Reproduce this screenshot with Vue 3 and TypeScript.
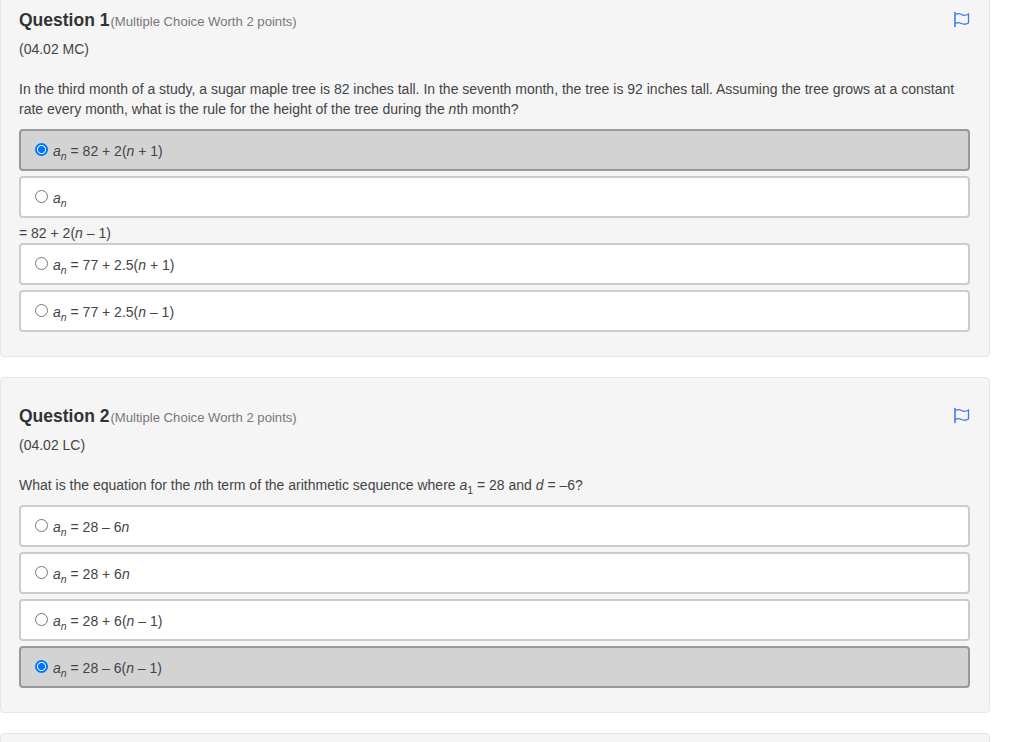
<script setup lang="ts">
interface Option { parts: [string, boolean][]; selected?: boolean; after?: [string, boolean][] }
interface Question { num: number; code: string; options: Option[] }

const poleX = 'M2 1v15'
const flagPath = 'M2.500 3.500c2-1.200 4-1.200 6 0s4.500 1 7 -.5v9c-2.500 1.500-5 1.500-7 .5s-4-1.200-6 0'

const questions: Question[] = [
  {
    num: 1,
    code: '(04.02 MC)',
    options: [
      { parts: [[' = 82 + 2(', false], ['n', true], [' + 1)', false]], selected: true },
      { parts: [], after: [['= 82 + 2(', false], ['n', true], [' – 1)', false]] },
      { parts: [[' = 77 + 2.5(', false], ['n', true], [' + 1)', false]] },
      { parts: [[' = 77 + 2.5(', false], ['n', true], [' – 1)', false]] },
    ],
  },
  {
    num: 2,
    code: '(04.02 LC)',
    options: [
      { parts: [[' = 28 – 6', false], ['n', true]] },
      { parts: [[' = 28 + 6', false], ['n', true]] },
      { parts: [[' = 28 + 6(', false], ['n', true], [' – 1)', false]] },
      { parts: [[' = 28 – 6(', false], ['n', true], [' – 1)', false]], selected: true },
    ],
  },
]
</script>

<template>
  <div class="page">
    <section v-for="q in questions" :key="q.num" class="card">
      <header class="head">
        <h2 class="title">Question {{ q.num }}</h2>
        <span class="worth">(Multiple Choice Worth 2 points)</span>
        <svg class="flag" width="18" height="17" viewBox="0 0 18 17" fill="none">
          <path :d="poleX" stroke="#3d7bf5" stroke-width="1.600" />
          <path :d="flagPath" stroke="#4a78e8" stroke-width="1.300" />
        </svg>
      </header>
      <p class="code">{{ q.code }}</p>
      <p v-if="q.num === 1" class="prompt">
        In the third month of a study, a sugar maple tree is 82 inches tall. In the seventh month, the tree is 92 inches tall. Assuming the tree grows at a constant rate every month, what is the rule for the height of the tree during the <i>n</i>th month?
      </p>
      <p v-else class="prompt">
        What is the equation for the <i>n</i>th term of the arithmetic sequence where <i>a</i><sub>1</sub> = 28 and <i>d</i> = –6?
      </p>
      <div class="options">
        <template v-for="(o, i) in q.options" :key="i">
          <div class="option" :class="{ selected: o.selected }">
            <span class="radio" :class="{ on: o.selected }"></span>
            <span class="label"><i>a</i><sub><i>n</i></sub><template v-for="(p, j) in o.parts" :key="j"><i v-if="p[1]">{{ p[0] }}</i><template v-else>{{ p[0] }}</template></template></span>
          </div>
          <div v-if="o.after" class="after"><template v-for="(p, j) in o.after" :key="j"><i v-if="p[1]">{{ p[0] }}</i><template v-else>{{ p[0] }}</template></template></div>
        </template>
      </div>
    </section>
    <section class="card stub"></section>
  </div>
</template>

<style>
html, body { margin: 0; background: #fff; overflow: hidden; }
</style>

<style scoped>
.page {
  width: 990px;
  height: 742px;
  overflow: hidden;
  font-family: "Liberation Sans", Arial, sans-serif;
  font-size: 14px;
  color: #444;
}
.card {
  box-sizing: border-box;
  width: 990px;
  background: #f5f5f5;
  border: 1px solid #e6e6e6;
  border-radius: 4px;
  padding: 28px 19px 19px 18px;
  margin-bottom: 20px;
}
.card:first-child {
  margin-top: -20px;
  padding-top: 29px;
}
.stub { height: 40px; }
.head {
  display: flex;
  align-items: baseline;
  height: 21px;
}
.title {
  margin: 0;
  font-size: 17.500px;
  font-weight: 700;
  line-height: 21px;
  color: #333;
}
.worth {
  font-size: 13.125px;
  color: #777;
  font-weight: 400;
  margin-left: 1px;
}
.flag { margin-left: auto; align-self: center; margin-right: -1px; margin-top: -3px; }
.code {
  margin: 8px 0 0;
  line-height: 20px;
}
.prompt {
  margin: 20px 0 0;
  line-height: 20px;
}
.prompt sub, .label sub {
  font-size: 10.500px;
  line-height: 0;
}
.options {
  margin-top: 10px;
  display: flex;
  flex-direction: column;
}
.option {
  box-sizing: border-box;
  height: 42px;
  margin-bottom: 5px;
  display: flex;
  align-items: center;
  gap: 5px;
  padding: 0 14px;
  background: #fff;
  border: 2px solid #ccc;
  border-radius: 4px;
}
.option.selected {
  background: #d3d3d3;
  border-color: #999;
}
.radio {
  box-sizing: border-box;
  width: 13px;
  height: 13px;
  border: 1px solid #767676;
  border-radius: 50%;
  background: #fff;
  margin-top: -1px;
  flex: none;
}
.radio.on {
  border: 2px solid #0075ff;
  background: radial-gradient(circle, #0075ff 0 3.300px, #fff 3.800px);
}
.label { position: relative; top: 1px; }
.after {
  line-height: 20px;
}
</style>
